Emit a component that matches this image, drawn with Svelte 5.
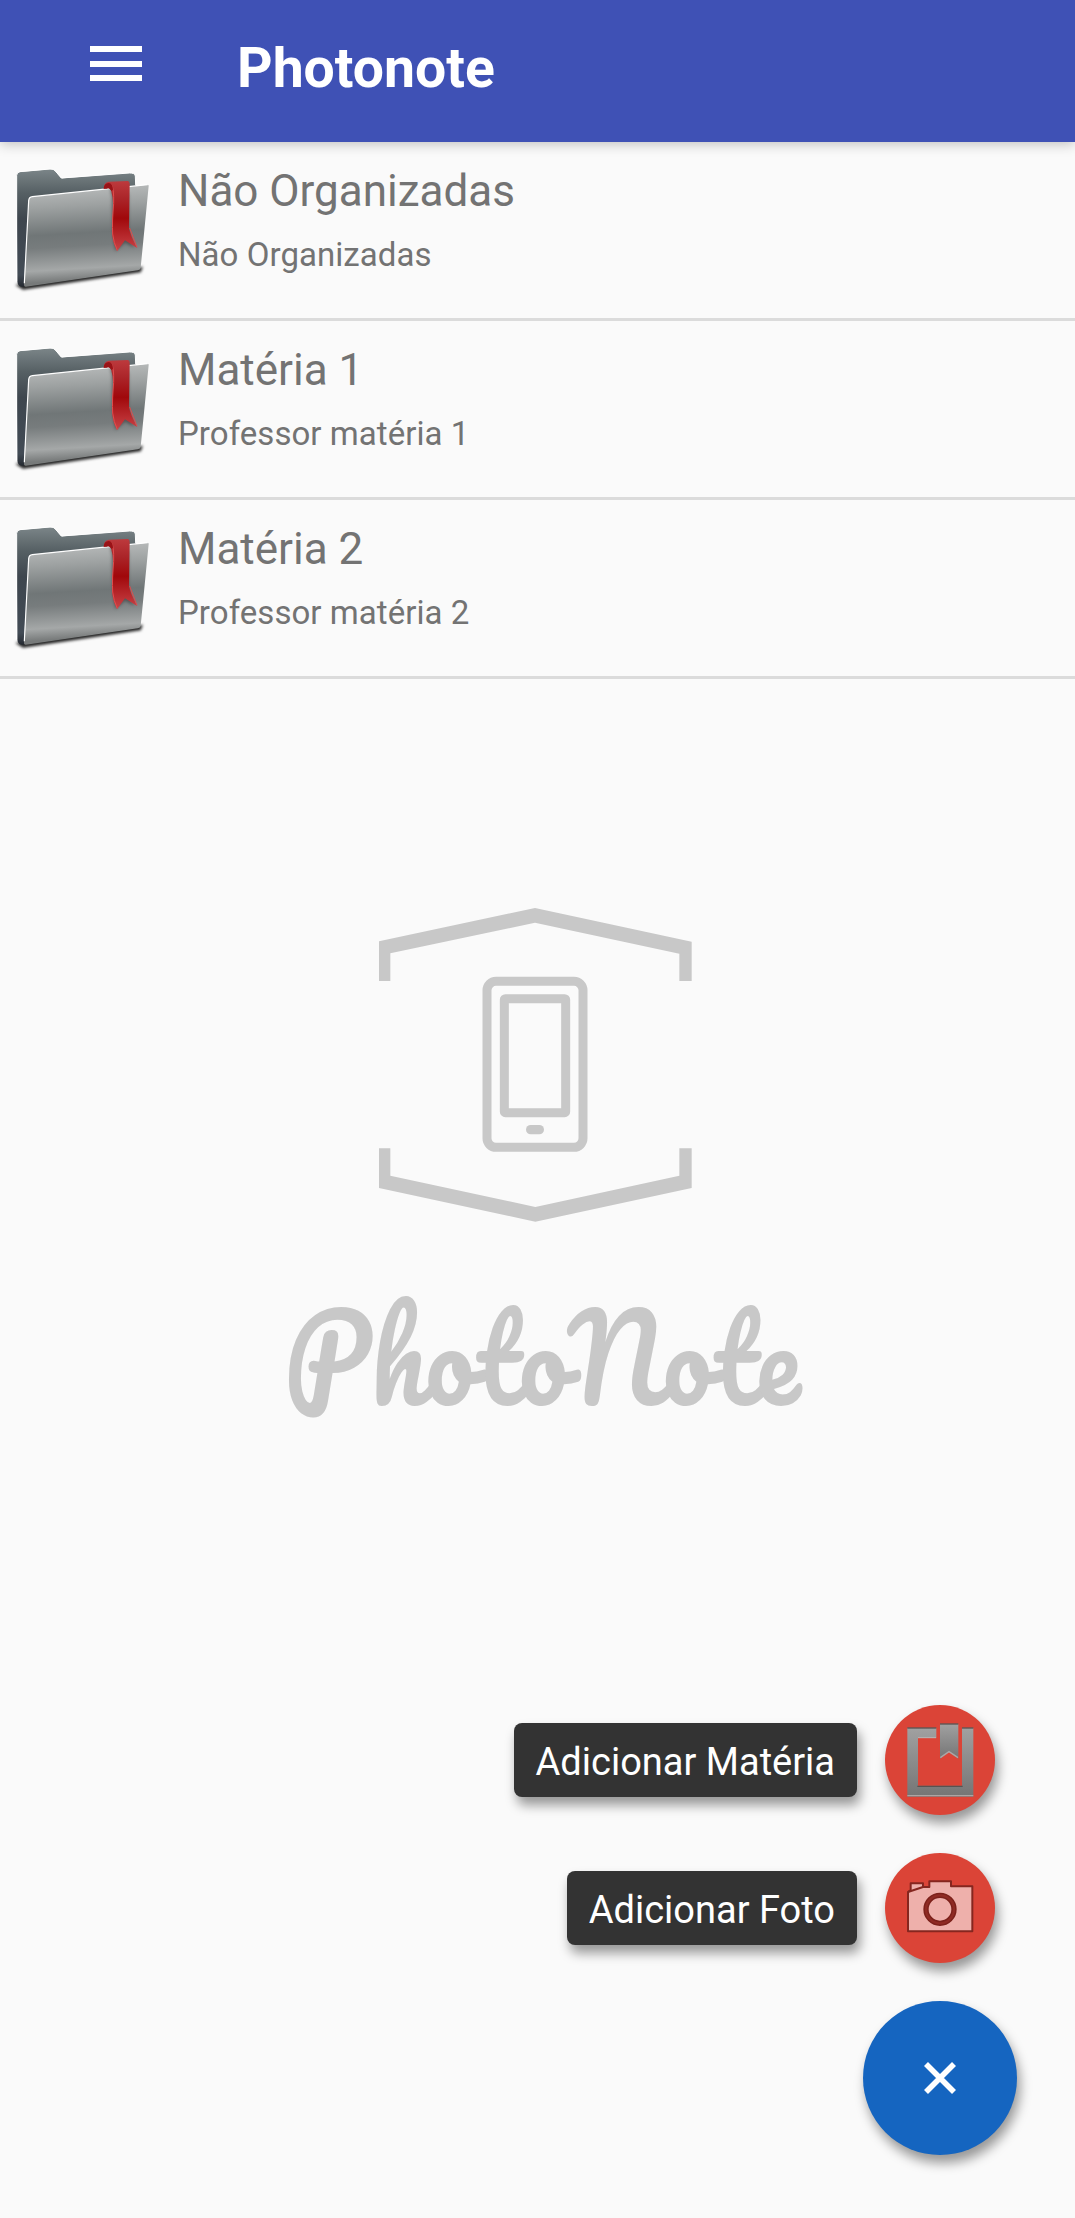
<script>
  const subjects = [
    { name: 'Não Organizadas', teacher: 'Não Organizadas' },
    { name: 'Matéria 1', teacher: 'Professor matéria 1' },
    { name: 'Matéria 2', teacher: 'Professor matéria 2' }
  ];
</script>

{#snippet folder()}
  <svg class="folder" viewBox="0 6 480 528" aria-hidden="true">
    <path class="ground" d="M54 436 L70 446 L420 394 L424 384 L80 430Z" />
    <path
      d="M50 106Q50 97 60 96L150 88Q161 87 166 94L183 114Q185 116 190 115L388 99Q404 98 406 108L408 150L90 172L76 438Q66 442 58 438Q52 434 52 424Z"
      fill="url(#folderBack)"
    />
    <path d="M50 424V106Q50 97 60 95L150 87Q161 86 166 93L184 114L388 99Q404 98 406 108L407 136" fill="none" stroke="#fff" stroke-width="3" />
    <path
      d="M86 182Q87 171 97 170L443 134Q446 134 446 138L422 383Q421 390 413 391L78 440Q71 441 72 432Z"
      fill="url(#folderFront)"
    />
    <path d="M73 430L86 182Q87 171 97 170L443 134" fill="none" stroke="#fff" stroke-width="3.5" />
    <path class="ribbon-shadow" d="M330 146L335 170Q335 280 346 334L375 308L404 324L386 292V160Z" />
    <path d="M311 146Q312 127 326 125L384 123Q389 124 389 132L387 264Q389 280 411 324L375 301L351 334Q333 298 336 254Q345 190 333 151Q328 142 320 145Z" fill="url(#ribbon)" />
    <path d="M313 145Q316 130 334 134Q342 142 341 190Q336 244 338 282Q341 309 352 331M389 264L411 322" fill="none" stroke="#df4d4d" stroke-width="3" />
    <path d="M311 146Q312 130 326 129Q338 130 339 149L334 153Q329 142 320 146Z" fill="#991317" />
  </svg>
{/snippet}

<svg class="defs" width="0" height="0" aria-hidden="true">
  <defs>
    <linearGradient id="folderBack" x1="0" y1="0" x2="0" y2="1">
      <stop offset="0" stop-color="#7b8588" />
      <stop offset=".2" stop-color="#566064" />
      <stop offset=".42" stop-color="#3e464e" />
      <stop offset=".9" stop-color="#424b55" />
      <stop offset="1" stop-color="#252a31" />
    </linearGradient>
    <linearGradient id="folderFront" gradientUnits="userSpaceOnUse" x1="240" y1="148" x2="256" y2="420">
      <stop offset="0" stop-color="#b4b7b7" />
      <stop offset=".18" stop-color="#9da1a1" />
      <stop offset=".48" stop-color="#707677" />
      <stop offset=".62" stop-color="#777c7d" />
      <stop offset=".87" stop-color="#a5a8a8" />
      <stop offset="1" stop-color="#777a7a" />
    </linearGradient>
    <linearGradient id="ribbon" x1="0" y1="0" x2="0" y2="1">
      <stop offset="0" stop-color="#bd3a3d" />
      <stop offset=".25" stop-color="#ab2529" />
      <stop offset=".53" stop-color="#a0080b" />
      <stop offset="1" stop-color="#ca4448" />
    </linearGradient>
    <linearGradient id="book" x1="0" y1="0" x2="0" y2="1">
      <stop offset="0" stop-color="#a1a1a1" />
      <stop offset="1" stop-color="#757575" />
    </linearGradient>
  </defs>
</svg>

<div class="screen">
  <header>
    <button class="menu" aria-label="Menu"><span></span><span></span><span></span></button>
    <h1>Photonote</h1>
  </header>

  <ul>
    {#each subjects as subject}
      <li>
        {@render folder()}
        <div class="info">
          <h2>{subject.name}</h2>
          <p>{subject.teacher}</p>
        </div>
      </li>
    {/each}
  </ul>

  <div class="brand">
    <svg class="mark" viewBox="0 0 1050 1050" aria-hidden="true">
      <path d="M57 273V154L525 54L995 155V273H958V191L525 98L91 190V273Z" />
      <path d="M57 775H91V857L526 951L958 857V775H995V894L526 995L57 894Z" />
      <rect class="line" x="381" y="274" width="288" height="498" rx="27" />
      <rect class="line" x="433" y="326" width="184" height="342" rx="3" />
      <rect x="498" y="705" width="54" height="28" rx="14" />
    </svg>
    <svg class="wordmark" viewBox="0 0 560 240">
      <text x="9" y="163" textLength="516" lengthAdjust="spacingAndGlyphs">PhotoNote</text>
    </svg>
  </div>

  <div class="actions">
    <div class="action">
      <span class="label">Adicionar Matéria</span>
      <button class="mini" aria-label="Adicionar Matéria">
        <svg viewBox="75 45 330 330">
          <path d="M142 113H229V144H174V287H306V113H340V320H142Z" fill="url(#book)" />
          <path d="M240 101H295V206L267 187L240 206Z" fill="url(#book)" />
          <path d="M142 114H229M306 114H340M240 102H295M172 289H308" stroke="#4d4644" stroke-opacity=".75" stroke-width="4" />
          <path d="M142 317H340M174 143H228M241 203L267 185L294 203" stroke="#bdb6b4" stroke-opacity=".75" stroke-width="4" fill="none" />
        </svg>
      </button>
    </div>
    <div class="action">
      <span class="label">Adicionar Foto</span>
      <button class="mini" aria-label="Adicionar Foto">
        <svg viewBox="75 489 330 330">
          <path class="camera" d="M144 606L152 600V580H189V591L208 591V574H273V589H337V724H144Z" />
          <path class="camera" d="M144 606L189 591H208" />
          <circle cx="240" cy="658" r="42" fill="none" stroke="#7c211b" stroke-width="16" />
          <circle cx="240" cy="658" r="42" fill="none" stroke="#8f2b24" stroke-width="7" />
        </svg>
      </button>
    </div>
    <button class="main" aria-label="Fechar">
      <svg viewBox="0 0 154 154"><path d="M63 63L91 91M91 63L63 91" stroke="#fff" stroke-width="5.6" /></svg>
    </button>
  </div>
</div>

<style>
  :global(body) {
    margin: 0;
    background: #fafafa;
  }
  .defs {
    display: block;
  }
  .screen {
    display: flex;
    flex-direction: column;
    height: 2218px;
    overflow: hidden;
    background: #fafafa;
    font-family: Roboto, sans-serif;
  }
  h1, h2, p, ul {
    margin: 0;
    padding: 0;
    font-weight: 400;
  }
  button {
    padding: 0;
    border: 0;
    background: none;
  }
  svg {
    display: block;
  }
  header {
    display: flex;
    flex: none;
    align-items: flex-start;
    box-sizing: border-box;
    height: 142px;
    padding: 46px 0 0 90px;
    background: #3f51b5;
    box-shadow: 0 2px 12px rgba(0, 0, 0, 0.24);
  }
  .menu {
    display: flex;
    flex-direction: column;
    justify-content: space-between;
    width: 52px;
    height: 35px;
  }
  .menu span {
    height: 6px;
    background: #fff;
  }
  h1 {
    margin: -10px 0 0 95px;
    color: #fff;
    font-size: 55.3px;
    font-weight: 700;
    line-height: 66px;
  }
  ul {
    flex: none;
    list-style: none;
  }
  li {
    display: flex;
    box-sizing: border-box;
    height: 179px;
    border-bottom: 3px solid #dbdbdb;
  }
  .folder {
    width: 160px;
    height: 176px;
  }
  .ground {
    fill: #222;
    stroke: #222;
    stroke-width: 6px;
    filter: blur(4px);
  }
  .ribbon-shadow {
    fill: #333;
    opacity: 0.5;
    filter: blur(5px);
  }
  .info {
    padding: 23px 0 0 18px;
    color: #737373;
  }
  h2 {
    font-size: 44px;
    line-height: 52px;
  }
  p {
    margin-top: 19px;
    font-size: 33px;
    line-height: 38px;
    letter-spacing: 0.05px;
  }
  .brand {
    display: flex;
    flex-direction: column;
    padding-top: 211px;
    fill: #c8c8c8;
  }
  .mark {
    width: 350px;
    height: 350px;
    margin-left: 360px;
  }
  .line {
    fill: none;
    stroke: #c8c8c8;
    stroke-width: 27px;
  }
  .wordmark {
    width: 560px;
    height: 240px;
    margin: 2px 0 0 275px;
    overflow: visible;
  }
  .wordmark text {
    font-family: Pacifico, Lato, sans-serif;
    font-size: 115px;
    font-weight: 400;
  }
  .actions {
    display: flex;
    flex-direction: column;
    align-items: flex-end;
    gap: 38px;
    margin-top: auto;
    padding: 0 58px 63px 0;
  }
  .action {
    display: flex;
    align-items: center;
    gap: 28px;
    margin-right: 22px;
  }
  .label {
    box-sizing: border-box;
    height: 74px;
    padding: 2px 22px 0;
    border-radius: 8px;
    background: #333;
    box-shadow: 3px 8px 12px rgba(0, 0, 0, 0.4);
    color: #fff;
    font-size: 38px;
    line-height: 74px;
  }
  .mini, .main {
    border-radius: 50%;
    box-shadow: 3px 8px 12px rgba(0, 0, 0, 0.4);
  }
  .mini {
    width: 110px;
    height: 110px;
    background: #db4437;
  }
  .main {
    width: 154px;
    height: 154px;
    background: #1565c0;
  }
  .camera {
    fill: #eeb0ab;
    stroke: #85261f;
    stroke-width: 6px;
    stroke-linejoin: round;
  }
</style>
